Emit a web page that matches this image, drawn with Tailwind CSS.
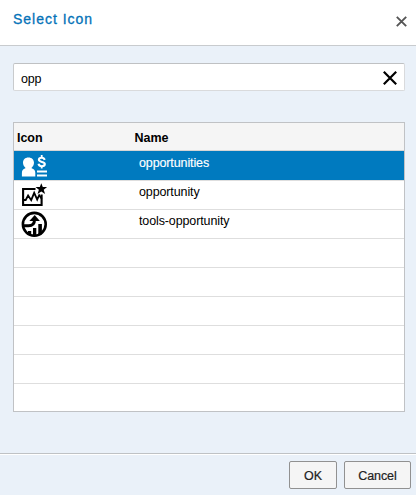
<!DOCTYPE html>
<html lang="en">
<head>
<meta charset="utf-8">
<title>Select Icon</title>
<script src="https://cdn.jsdelivr.net/npm/@tailwindcss/browser@4"></script>
</head>
<body class="w-[416px] h-[495px] overflow-hidden bg-[#eaf1f9] text-black font-['Liberation_Sans',Arial,sans-serif] text-[12.5px] leading-[16px] flex flex-col">
  <header class="h-[46px] shrink-0 bg-white border-b border-[#c8cbce] flex justify-between pl-[13px] pr-[9px]">
    <h1 class="pt-[11px] text-[14px] tracking-[0.98px] text-[#0572b8] [-webkit-text-stroke:0.3px_#0572b8]">Select Icon</h1>
    <button aria-label="Close" class="h-[11px] mt-[16px]"><svg class="block" width="11" height="11" viewBox="0 0 11 11" fill="none" stroke="#555" stroke-width="1.9"><path d="M.8.8l9.4 9.4M10.2.8L.8 10.2"/></svg></button>
  </header>
  <main class="px-[13px] pr-[11px] pt-[17px] h-[407px] shrink-0">
    <div class="h-[28px] w-[392px] bg-white border border-[#d9dadc] border-t-[#bfc1c3] border-l-[#c9cbcd] rounded-[2px] flex items-center justify-between pl-[7px] pr-[7px]">
      <span class="pt-[3px] tracking-[-0.15px]">opp</span>
      <svg class="mt-[2px]" width="14" height="14" viewBox="0 0 14 14" fill="none" stroke="#000" stroke-width="2.200"><path d="M.8.8l12.4 12.4M13.2.8L.8 13.2"/></svg>
    </div>
    <div class="mt-[31px] w-[392px] h-[290px] border border-[#c0c2c5] bg-white flex flex-col tracking-[-0.12px]">
      <div class="h-[28px] shrink-0 bg-[#f5f5f5] border-b border-[#d5d5d5] flex font-bold pl-[3px] pt-[7px] tracking-[-0.05px]">
        <div class="w-[117.500px]">Icon</div><div>Name</div>
      </div>
      <div class="h-[30px] shrink-0 bg-[#007abf] border-b border-[#dedede] text-white flex pl-[7px]">
        <div class="w-[118px] pt-[4px]">
          <svg class="block" width="28" height="23" viewBox="0 0 28 23" fill="#fff">
            <path d="M7.400 2.500c3.500 0 5.600 2.200 5.600 5.300 0 2.300-1.200 3.900-2.400 5v.4c2.600.7 3.700 2.200 3.700 4.700v3.700H.9v-3.700c0-2.500 1-4 3.500-4.700v-.4C3.200 11.700 2 10.100 2 7.800c0-3.100 2-5.300 5.400-5.300z"/>
            <path d="M16 15.600h10v2H16zM16 19.600h10v2H16z"/>
            <path d="M23.700 4.900C23.300 3.500 22.300 2.700 20.700 2.700c-1.700 0-2.800.8-2.800 2.100 0 2.700 5.900 1.500 5.900 4.200 0 1.400-1.200 2.200-3 2.200-1.800 0-2.900-.8-3.300-2.500" fill="none" stroke="#fff" stroke-width="2.100"/>
            <path d="M19.800 0h1.800v3h-1.800zM19.800 11h1.800v2.400h-1.800z"/>
          </svg>
        </div><div class="pt-[4px] [-webkit-text-stroke:0.15px_#fff]">opportunities</div>
      </div>
      <div class="h-[29px] shrink-0 border-b border-[#dedede] flex pl-[7px]">
        <div class="w-[118px] pt-[2px]">
          <svg class="block" width="28" height="24" viewBox="0 0 28 24">
            <path d="M14.500 6H2.100v16h18.500V11.500" fill="none" stroke="#000" stroke-width="2.100"/>
            <path d="M2.500 17h2.200l2.400-4.500 3.100 4.700 3-7.400 3 6.700 2-4.300 2.500 3.600" fill="none" stroke="#000" stroke-width="1.800"/>
            <path d="M20.300.2l1.500 3.800h4.300l-3.400 2.700 1.400 4.300-3.800-2.500-3.800 2.500 1.400-4.300-3.400-2.700h4.300z"/>
          </svg>
        </div><div class="pt-[3px]">opportunity</div>
      </div>
      <div class="h-[29px] shrink-0 border-b border-[#dedede] flex pl-[7px]">
        <div class="w-[118px] pt-[1px]">
          <svg class="block" width="28" height="27" viewBox="0 0 28 27">
            <circle cx="13.300" cy="13.300" r="11.400" fill="none" stroke="#000" stroke-width="2.600"/>
            <path d="M3 14.800h4.500c4 0 6-1.800 6-6" fill="none" stroke="#000" stroke-width="3"/>
            <path d="M13.700 4l5.200 6.100H8.400z"/>
            <path d="M7 20h3.200v4H7zM12 17h3.300v8H12zM17.300 13h3.600v10.200h-3.600z"/>
          </svg>
        </div><div class="pt-[3px]">tools-opportunity</div>
      </div>
      <div class="h-[29px] shrink-0 border-b border-[#dedede]"></div>
      <div class="h-[29px] shrink-0 border-b border-[#dedede]"></div>
      <div class="h-[29px] shrink-0 border-b border-[#dedede]"></div>
      <div class="h-[29px] shrink-0 border-b border-[#dedede]"></div>
      <div class="h-[29px] shrink-0 border-b border-[#dedede]"></div>
    </div>
  </main>
  <footer class="h-[42px] shrink-0 border-t border-[#bfc2c5] pr-[5px]">
    <div class="h-px w-[416px] bg-white"></div>
    <div class="flex justify-end gap-[7px] pt-[6px]">
      <button class="w-[48px] h-[28px] rounded-[2px] border border-[#919191] bg-[#f5f5f5] text-[#222] pt-[1px] tracking-[-0.1px] [-webkit-text-stroke:0.2px_#222]">OK</button>
      <button class="w-[67px] h-[28px] rounded-[2px] border border-[#919191] bg-[#f5f5f5] text-[#222] pt-[1px] tracking-[-0.1px] [-webkit-text-stroke:0.2px_#222]">Cancel</button>
    </div>
  </footer>
</body>
</html>
